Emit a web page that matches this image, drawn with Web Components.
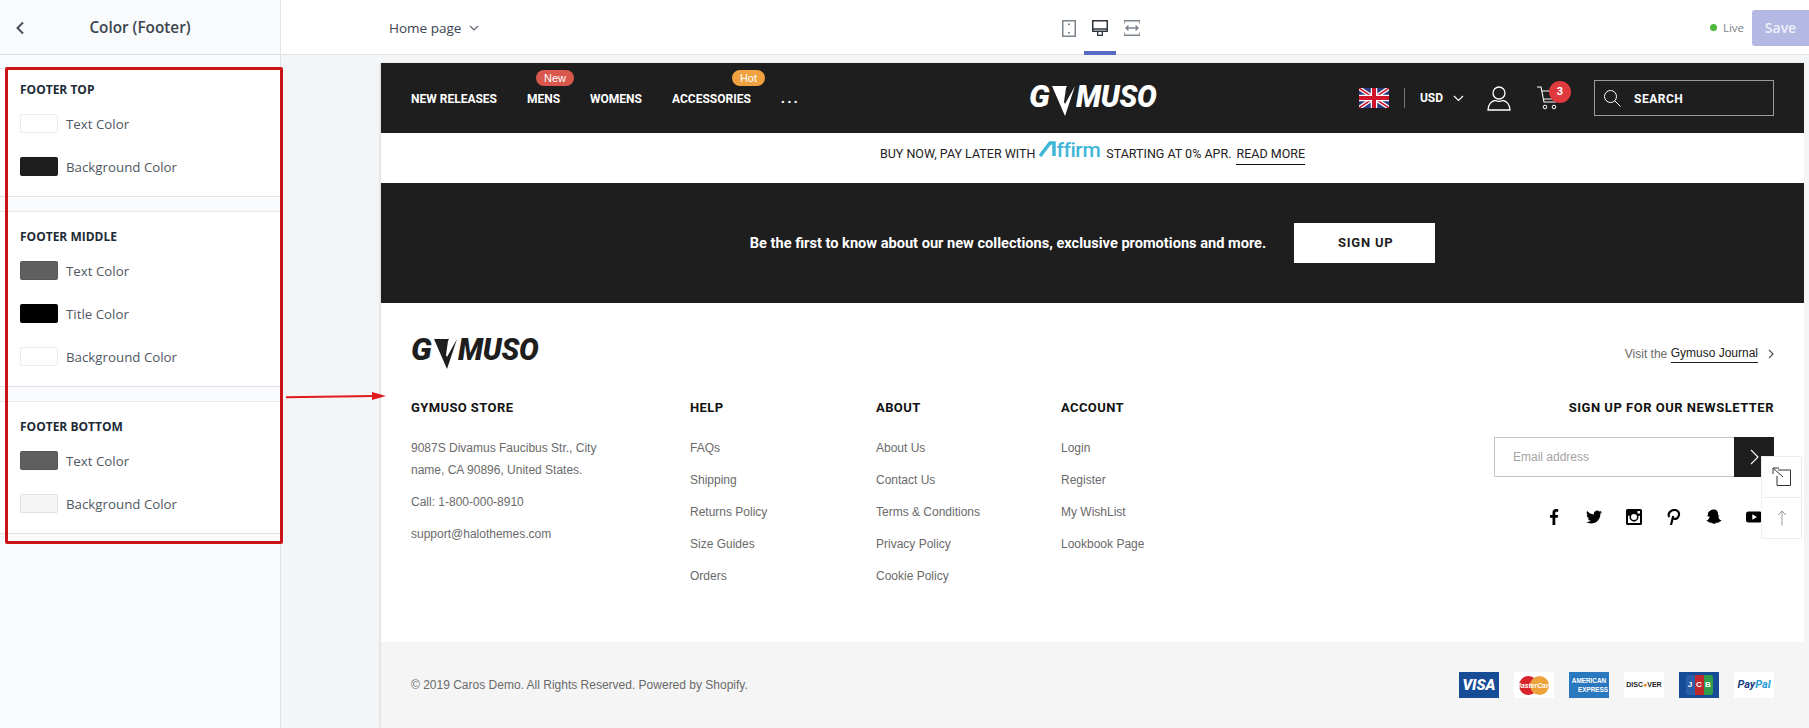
<!DOCTYPE html>
<html lang="en">
<head>
<meta charset="utf-8">
<title>Color (Footer)</title>
<style>
  html, body { margin: 0; height: 100%; overflow: hidden; }
  body { font-family: "Open Sans", "Liberation Sans", sans-serif; }
</style>
</head>
<body>
<editor-app></editor-app>

<script>
const DISPLAY = "Roboto, sans-serif";
const ARIAL = "'Liberation Sans', Arial, sans-serif";

class ColorRow extends HTMLElement {
  connectedCallback() {
    const color = this.getAttribute("color") || "#fff";
    const label = this.getAttribute("label") || "";
    this.attachShadow({ mode: "open" }).innerHTML = `
      <style>
        :host { display: flex; align-items: center; height: 19px; gap: 8px; margin-top: 24px; }
        .swatch { width: 38px; height: 19px; box-sizing: border-box; border-radius: 2px; background: ${color}; border: 1px solid rgba(0,0,0,.08); }
        span { font-size: 13.3px; color: #4f5863; }
      </style>
      <div class="swatch"></div><span>${label}</span>`;
  }
}
customElements.define("color-row", ColorRow);

class ColorSection extends HTMLElement {
  connectedCallback() {
    this.attachShadow({ mode: "open" }).innerHTML = `
      <style>
        :host { display: block; background: #fff; border-top: 1px solid #e6e8eb; border-bottom: 1px solid #dfe3e8; padding: 0 20px 20px; }
        h3 { margin: 0; font-size: 12px; line-height: 18px; font-weight: 700; color: #212b36; padding-top: var(--title-top, 16px); }
        ::slotted(color-row:first-of-type) { margin-top: 15px; }
      </style>
      <h3>${this.getAttribute("title")}</h3>
      <slot></slot>`;
  }
}
customElements.define("color-section", ColorSection);

class ThemeSidebar extends HTMLElement {
  constructor() {
    super();
    this.attachShadow({ mode: "open" }).innerHTML = `
      <style>
        :host { display: block; width: 281px; box-sizing: border-box; background: #f9fafb; border-right: 1px solid #e1e3e6; position: relative; }
        header { height: 55px; box-sizing: border-box; border-bottom: 1px solid #dfe3e8; position: relative; display: flex; align-items: center; justify-content: center; padding-bottom: 1px; }
        header svg { position: absolute; left: 15px; top: 21px; }
        h2 { margin: 0; font-size: 15.3px; font-weight: 600; color: #3b444f; }
        .sections { display: flex; flex-direction: column; gap: 14px; padding-top: 13px; }
        color-section:first-child { --title-top: 12px; }
        .red { position: absolute; left: 5px; top: 67px; width: 278px; height: 477px; box-sizing: border-box; border: 3px solid #cc1417; border-radius: 2px; pointer-events: none; }
      </style>
      <header>
        <svg width="10" height="14" viewBox="0 0 10 14"><path d="M8 1.5 2.5 7 8 12.5" fill="none" stroke="#454f5b" stroke-width="2"/></svg>
        <h2>Color (Footer)</h2>
      </header>
      <div class="sections">
        <color-section title="FOOTER TOP">
          <color-row color="#ffffff" label="Text Color"></color-row>
          <color-row color="#1e1e1e" label="Background Color"></color-row>
        </color-section>
        <color-section title="FOOTER MIDDLE">
          <color-row color="#5f5f5f" label="Text Color"></color-row>
          <color-row color="#000000" label="Title Color"></color-row>
          <color-row color="#ffffff" label="Background Color"></color-row>
        </color-section>
        <color-section title="FOOTER BOTTOM">
          <color-row color="#5f5f5f" label="Text Color"></color-row>
          <color-row color="#f5f5f5" label="Background Color"></color-row>
        </color-section>
      </div>
      <div class="red"></div>`;
  }
}
customElements.define("theme-sidebar", ThemeSidebar);

class TopBar extends HTMLElement {
  constructor() {
    super();
    this.attachShadow({ mode: "open" }).innerHTML = `
      <style>
        :host { display: grid; grid-template-columns: 772px auto 1fr; align-items: center; height: 55px; box-sizing: border-box; background: #fff; border-bottom: 1px solid #dfe3e8; }
        .page { display: flex; align-items: center; gap: 8px; padding-left: 108px; font-size: 13.5px; color: #3b444f; }
        .devices { display: flex; height: 55px; align-self: start; }
        .device { width: 31px; display: flex; align-items: center; justify-content: center; box-sizing: border-box; padding-top: 1px; }
        .device.on { width: 32px; border-bottom: 4px solid #5c6ac4; padding-top: 5px; }
        .right { display: flex; align-items: center; justify-content: flex-end; height: 54px; }
        .dot { width: 7px; height: 7px; border-radius: 50%; background: #50b83c; margin-right: 6px; }
        .live { font-size: 11.5px; color: #7a828b; margin-right: 8px; }
        .save { width: 57px; height: 36px; display: flex; align-items: center; justify-content: center; background: #b3b9e2; border-radius: 3px 0 0 3px; color: #eef0fa; font-size: 14px; font-weight: 600; }
      </style>
      <div class="page">Home page
        <svg width="10" height="6" viewBox="0 0 10 6"><path d="M1 1l4 4 4-4" fill="none" stroke="#5f6872" stroke-width="1.2"/></svg>
      </div>
      <div class="devices">
        <div class="device"><svg width="14" height="17" viewBox="0 0 14 17"><rect x=".75" y=".75" width="12.5" height="15.5" fill="none" stroke="#7b838c" stroke-width="1.5"/><rect x="6" y="3.5" width="2" height="1.5" fill="#7b838c"/><rect x="6" y="12" width="2" height="1.5" fill="#7b838c"/></svg></div>
        <div class="device on"><svg width="16" height="16" viewBox="0 0 16 16"><rect x=".75" y=".75" width="14.5" height="10.5" fill="none" stroke="#2c343d" stroke-width="1.5"/><path d="M1 9h14" stroke="#2c343d" stroke-width="1.5"/><path d="M5 15.3h6M5.7 11v4M10.3 11v4" stroke="#2c343d" stroke-width="1.3" fill="none"/></svg></div>
        <div class="device"><svg width="16" height="16" viewBox="0 0 16 16"><path d="M0 .8h16M0 15.2h16M0 .8v3M16 .8v3M0 15.2v-3M16 15.2v-3" fill="none" stroke="#7b838c" stroke-width="1.4"/><path d="M1.5 8h13M4.5 5.5 2 8l2.5 2.5M11.5 5.5 14 8l-2.5 2.5" fill="none" stroke="#7b838c" stroke-width="1.3"/></svg></div>
      </div>
      <div class="right"><div class="dot"></div><div class="live">Live</div><div class="save">Save</div></div>`;
  }
}
customElements.define("top-bar", TopBar);

class BrandLogo extends HTMLElement {
  connectedCallback() {
    const color = this.getAttribute("color") || "#fff";
    this.attachShadow({ mode: "open" }).innerHTML = `
      <style>
        :host { display: inline-flex; align-items: flex-start; height: 31px; color: ${color}; font-family: Roboto, sans-serif; font-weight: 900; font-style: italic; font-size: 32px; line-height: 23px; }
        span { display: inline-block; transform-origin: 0 0; }
        .g { width: 23px; transform: scaleX(.98); }
        .m { width: 80px; transform: scaleX(.92); letter-spacing: -.3px; }
        svg { margin-right: 1px; }
      </style>
      <span class="g">G</span>
      <svg width="23" height="31" viewBox="0 0 23 31"><path d="M0 1h15l-1 2-2 14 1 2 10-18-10 30z" fill="${color}"/></svg>
      <span class="m">MUSO</span>`;
  }
}
customElements.define("brand-logo", BrandLogo);

class StoreHeader extends HTMLElement {
  constructor() {
    super();
    this.attachShadow({ mode: "open" }).innerHTML = `
      <style>
        :host { display: grid; grid-template-columns: 1fr auto 1fr; align-items: center; height: 70px; padding: 0 30px; background: #1e1e1e; color: #fff; font-family: ${DISPLAY}; font-weight: 700; font-size: 12px; }
        nav { display: flex; gap: 30px; align-items: center; margin-top: 1px; }
        .item { position: relative; white-space: nowrap; }
        .badge { position: absolute; top: -22px; height: 16px; line-height: 16px; border-radius: 8px; font: 400 11px/16px ${ARIAL}; text-align: center; color: #fff; }
        .new { left: 9px; width: 38px; background: #d9574c; }
        .hot { left: 60px; width: 33px; background: #efa23f; }
        brand-logo { margin-top: 5px; }
        .tools { display: flex; align-items: center; justify-content: flex-end; }
        .div { width: 1px; height: 20px; background: #777; margin: 0 15px; }
        .usd { margin-right: 10px; }
        .cart { position: relative; margin: 0 35px 0 26px; height: 24px; }
        .count { position: absolute; left: 12px; top: -5px; width: 22px; height: 22px; border-radius: 50%; background: #e03a3e; font: 700 11px/22px ${DISPLAY}; text-align: center; }
        .search { width: 180px; height: 36px; box-sizing: border-box; border: 1px solid #9a9a9a; display: flex; align-items: center; gap: 13px; padding-left: 8px; letter-spacing: .5px; }
        .search span { margin-top: 1px; }
      </style>
      <nav>
        <div class="item">NEW RELEASES</div>
        <div class="item">MENS<span class="badge new">New</span></div>
        <div class="item">WOMENS</div>
        <div class="item">ACCESSORIES<span class="badge hot">Hot</span></div>
        <div class="item" style="letter-spacing:2px;font-size:15px;margin-top:-1px">...</div>
      </nav>
      <brand-logo color="#fff"></brand-logo>
      <div class="tools">
        <svg width="30" height="20" viewBox="0 0 60 40"><rect width="60" height="40" fill="#2a3a80"/><path d="M0 0l60 40M60 0 0 40" stroke="#fff" stroke-width="8"/><path d="M0 0l60 40M60 0 0 40" stroke="#cf142b" stroke-width="3"/><path d="M30 0v40M0 20h60" stroke="#fff" stroke-width="13"/><path d="M30 0v40M0 20h60" stroke="#cf142b" stroke-width="8"/></svg>
        <div class="div"></div>
        <div class="usd">USD</div>
        <svg width="11" height="7" viewBox="0 0 11 7"><path d="M1 1l4.5 4.500L10 1" fill="none" stroke="#fff" stroke-width="1.2"/></svg>
        <svg style="margin-left:23px" width="24" height="25" viewBox="0 0 24 25"><circle cx="12" cy="7" r="6" fill="none" stroke="#fff" stroke-width="1.3"/><path d="M1 24c0-6 4-9 7-9.500 2.500 1 5.500 1 8 0 3 .5 7 3.500 7 9.500z" fill="none" stroke="#fff" stroke-width="1.3"/></svg>
        <div class="cart">
          <svg width="22" height="24" viewBox="0 0 22 24"><path d="M0 1h4l3 15h12M5 5h16l-2 8H7" fill="none" stroke="#fff" stroke-width="1.1"/><circle cx="8" cy="21" r="1.800" fill="none" stroke="#fff"/><circle cx="17" cy="21" r="1.800" fill="none" stroke="#fff"/></svg>
          <span class="count">3</span>
        </div>
        <div class="search">
          <svg width="18" height="18" viewBox="0 0 18 18"><circle cx="7.500" cy="7.500" r="6" fill="none" stroke="#fff" stroke-width="1"/><path d="M11.800 11.800 17.500 17.500" stroke="#fff" stroke-width="1"/></svg>
          <span>SEARCH</span>
        </div>
      </div>`;
  }
}
customElements.define("store-header", StoreHeader);

class PromoBar extends HTMLElement {
  constructor() {
    super();
    this.attachShadow({ mode: "open" }).innerHTML = `
      <style>
        :host { display: flex; align-items: center; justify-content: center; gap: 4px; height: 50px; background: #fff; color: #222; font-family: ${DISPLAY}; font-size: 12.5px; padding-bottom: 10px; box-sizing: border-box; }
        .affirm { display: inline-flex; align-items: baseline; color: #3fb6d8; font: 500 21px/20px Roboto, sans-serif; letter-spacing: -.4px; margin: -7px 2px 0 0; }
        a { color: inherit; padding-bottom: 3px; border-bottom: 1px solid #111; margin-left: 1px; margin-top: 4px; }
      </style>
      <span>BUY NOW, PAY LATER WITH</span>
      <span class="affirm"><svg width="17" height="16" viewBox="0 0 17 16"><path d="M1 15 11 2h4v13" fill="none" stroke="#3fb6d8" stroke-width="3.500"/></svg>ffirm</span>
      <span>STARTING AT 0% APR.</span>
      <a>READ MORE</a>`;
  }
}
customElements.define("promo-bar", PromoBar);

class SignupBand extends HTMLElement {
  constructor() {
    super();
    this.attachShadow({ mode: "open" }).innerHTML = `
      <style>
        :host { display: flex; align-items: center; justify-content: center; gap: 28px; height: 120px; background: #1e1e1e; color: #fff; font-family: ${DISPLAY}; font-weight: 700; font-size: 14.6px; }
        button { all: unset; width: 141px; height: 40px; background: #fff; color: #1e1e1e; text-align: center; line-height: 40px; font-size: 13px; letter-spacing: .8px; padding-left: 2px; box-sizing: border-box; }
      </style>
      <span>Be the first to know about our new collections, exclusive promotions and more.</span>
      <button>SIGN UP</button>`;
  }
}
customElements.define("signup-band", SignupBand);

class FooterCol extends HTMLElement {
  connectedCallback() {
    this.attachShadow({ mode: "open" }).innerHTML = `
      <style>
        :host { display: block; }
        h4 { margin: 0 0 14px; font: 700 13px/20px ${DISPLAY}; letter-spacing: .4px; color: #111; }
        ::slotted(div) { font: 12px/32px ${ARIAL}; color: #6a6a6a; }
      </style>
      <h4>${this.getAttribute("title")}</h4>
      <slot></slot>`;
  }
}
customElements.define("footer-col", FooterCol);

class NewsletterBox extends HTMLElement {
  constructor() {
    super();
    this.attachShadow({ mode: "open" }).innerHTML = `
      <style>
        :host { display: flex; flex-direction: column; align-items: flex-end; }
        h4 { margin: 0 0 19px; font: 700 13px/20px ${DISPLAY}; letter-spacing: .5px; color: #111; }
        .form { display: flex; width: 280px; height: 40px; }
        .input { flex: 1; box-sizing: border-box; border: 1px solid #c4c4c4; border-right: 0; padding-left: 18px; font: 12px/38px ${ARIAL}; color: #a4a4a4; }
        .go { width: 40px; background: #1e1e1e; display: flex; align-items: center; justify-content: center; }
        .social { display: flex; gap: 24px; margin-top: 32px; padding-right: 12px; }
        .social svg { display: block; }
      </style>
      <h4>SIGN UP FOR OUR NEWSLETTER</h4>
      <div class="form">
        <div class="input">Email address</div>
        <div class="go"><svg width="9" height="16" viewBox="0 0 9 16"><path d="M1 1l7 7-7 7" fill="none" stroke="#fff" stroke-width="1.100"/></svg></div>
      </div>
      <div class="social">
        <svg width="16" height="16" viewBox="0 0 16 16"><path d="M9.300 16V8.800h2.400l.4-2.800H9.300V4.200c0-.8.200-1.400 1.400-1.400h1.500V.2C11.900.100 11.100 0 10.100 0 8 0 6.500 1.300 6.500 3.700V6H4v2.800h2.500V16z"/></svg>
        <svg width="16" height="16" viewBox="0 0 24 24"><path d="M23.950 4.570a10 10 0 0 1-2.820.77 4.960 4.960 0 0 0 2.160-2.720c-.95.55-2 .96-3.130 1.190a4.920 4.920 0 0 0-8.380 4.480C7.690 8.100 4.070 6.130 1.640 3.160a4.820 4.820 0 0 0-.66 2.470c0 1.700.87 3.210 2.190 4.100a4.900 4.900 0 0 1-2.230-.61v.06a4.920 4.920 0 0 0 3.950 4.830 5 5 0 0 1-2.210.08 4.940 4.940 0 0 0 4.600 3.420A9.870 9.870 0 0 1 0 19.540a14 14 0 0 0 7.560 2.210c9.050 0 14-7.500 14-13.980 0-.21 0-.42-.02-.63a9.940 9.940 0 0 0 2.460-2.550z"/></svg>
        <svg width="16" height="16" viewBox="0 0 16 16"><path fill-rule="evenodd" d="M1.500 0h13A1.500 1.500 0 0 1 16 1.500v13a1.500 1.500 0 0 1-1.500 1.500h-13A1.500 1.500 0 0 1 0 14.500v-13A1.500 1.500 0 0 1 1.500 0zM11.500 2v2.500H14V2zM2 6.800V14h12V6.800h-1.700a4.500 4.500 0 1 1-8.600 0zM8 5a3 3 0 1 0 0 6 3 3 0 0 0 0-6z"/></svg>
        <svg width="16" height="16" viewBox="0 0 16 16"><path d="M5 16l2.200-9M3.200 8C1.600 4.800 4 1 8.300 1c3.700 0 5.200 2.600 4.600 5.300-.6 2.800-3.600 4.500-5.600 3" fill="none" stroke="#000" stroke-width="2.200"/></svg>
        <svg width="16" height="16" viewBox="0 0 16 16"><path d="M8 .5c2.700 0 4 2 4 4.200v1.600l1.400.2-1.100 1.400c.4 1.500 1.700 3 3.200 3.500-.3.700-1.300 1-2 1.100l-.4 1c-1.500-.2-2.800.2-4 1.100-.6.300-1.600.3-2.200 0-1.200-.9-2.500-1.300-4-1.100l-.4-1c-.7-.1-1.700-.4-2-1.100 1.500-.5 2.800-2 3.200-3.500L.6 6.500 2 6.300V4.700C2 2.500 5.300.5 8 .5z"/></svg>
        <svg width="16" height="16" viewBox="0 0 16 16"><path fill-rule="evenodd" d="M2.500 2.500h11A2.500 2.500 0 0 1 16 5v6a2.500 2.500 0 0 1-2.500 2.500h-11A2.500 2.500 0 0 1 0 11V5a2.500 2.500 0 0 1 2.500-2.500zM6.300 5.300v5.400L11 8z"/></svg>
      </div>`;
  }
}
customElements.define("newsletter-box", NewsletterBox);

class FooterMiddle extends HTMLElement {
  constructor() {
    super();
    this.attachShadow({ mode: "open" }).innerHTML = `
      <style>
        :host { display: block; height: 339px; box-sizing: border-box; padding: 35px 30px 0; background: #fff; }
        .top { display: flex; justify-content: space-between; align-items: flex-start; height: 60px; }
        .visit { font: 12px/16px ${ARIAL}; color: #6a6a6a; display: flex; align-items: center; margin-top: 7px; white-space: pre; }
        .visit a { color: #222; border-bottom: 1px solid #222; padding-bottom: 1px; margin-right: 10px; }
        .cols { display: grid; grid-template-columns: 279px 186px 185px 1fr 280px; }
      </style>
      <div class="top">
        <brand-logo color="#1e1e1e"></brand-logo>
        <div class="visit">Visit the <a>Gymuso Journal</a><svg width="6" height="10" viewBox="0 0 6 10"><path d="M1 .8 5 5 1 9.200" fill="none" stroke="#444" stroke-width="1.100"/></svg></div>
      </div>
      <div class="cols">
        <footer-col title="GYMUSO STORE">
          <div style="line-height:22px;margin-top:19px">9087S Divamus Faucibus Str., City<br>name, CA 90896, United States.</div>
          <div style="line-height:22px;margin-top:10px">Call: 1-800-000-8910</div>
          <div style="line-height:22px;margin-top:10px">support@halothemes.com</div>
        </footer-col>
        <footer-col title="HELP">
          <div>FAQs</div><div>Shipping</div><div>Returns Policy</div><div>Size Guides</div><div>Orders</div>
        </footer-col>
        <footer-col title="ABOUT">
          <div>About Us</div><div>Contact Us</div><div>Terms &amp; Conditions</div><div>Privacy Policy</div><div>Cookie Policy</div>
        </footer-col>
        <footer-col title="ACCOUNT">
          <div>Login</div><div>Register</div><div>My WishList</div><div>Lookbook Page</div>
        </footer-col>
        <newsletter-box></newsletter-box>
      </div>`;
  }
}
customElements.define("footer-middle", FooterMiddle);

class PayCard extends HTMLElement {
  connectedCallback() {
    const type = this.getAttribute("type");
    const cards = {
      visa: `<div style="background:#164b96;color:#fff;font:italic 900 15px/26px Roboto,sans-serif">VISA</div>`,
      master: `<div style="background:#fff;position:relative"><i style="position:absolute;left:5px;top:4px;width:19px;height:19px;border-radius:50%;background:#d8232a"></i><i style="position:absolute;left:16px;top:4px;width:19px;height:19px;border-radius:50%;background:#eea23a"></i><b style="position:relative;color:#fff;font:italic 700 6.800px/27px ${ARIAL}">MasterCard</b></div>`,
      amex: `<div style="background:#2a78bd;color:#fff;font:700 6.400px/9px ${ARIAL};padding-top:4px;height:22px">AMERICAN<br><span style="padding-left:8px">EXPRESS</span></div>`,
      discover: `<div style="background:#fff;color:#222;font:700 7px/26px ${ARIAL}">DISC<span style="color:#e8862b">●</span>VER</div>`,
      jcb: `<div style="background:#164b96;display:flex;justify-content:center;align-items:center;color:#fff;font:700 8px/19px ${ARIAL}"><span style="background:#2b5ea8;width:9px;height:20px;border-radius:3px 0 0 3px">J</span><span style="background:#c0272d;width:9px;height:20px">C</span><span style="background:#2f9e4c;width:9px;height:20px;border-radius:0 3px 3px 0">B</span></div>`,
      paypal: `<div style="background:#fff;color:#1b3f84;font:italic 700 11px/26px Roboto,sans-serif">Pay<span style="color:#2a9bd6">Pal</span></div>`,
    };
    this.attachShadow({ mode: "open" }).innerHTML = `
      <style>
        :host { display: block; width: 40px; height: 26px; overflow: hidden; }
        div { height: 26px; text-align: center; white-space: nowrap; overflow: hidden; }
      </style>${cards[type]}`;
  }
}
customElements.define("pay-card", PayCard);

class FooterBottom extends HTMLElement {
  constructor() {
    super();
    this.attachShadow({ mode: "open" }).innerHTML = `
      <style>
        :host { display: flex; justify-content: space-between; align-items: center; height: 86px; padding: 0 30px; background: #f5f5f5; font: 12px ${ARIAL}; color: #6a6a6a; }
        .cards { display: flex; gap: 15px; }
      </style>
      <span>© 2019 Caros Demo. All Rights Reserved. Powered by Shopify.</span>
      <div class="cards">
        <pay-card type="visa"></pay-card><pay-card type="master"></pay-card><pay-card type="amex"></pay-card>
        <pay-card type="discover"></pay-card><pay-card type="jcb"></pay-card><pay-card type="paypal"></pay-card>
      </div>`;
  }
}
customElements.define("footer-bottom", FooterBottom);

class FloatTools extends HTMLElement {
  constructor() {
    super();
    this.attachShadow({ mode: "open" }).innerHTML = `
      <style>
        :host { position: absolute; right: 2px; top: 393px; width: 41px; background: #fff; border: 1px solid #eee; box-sizing: border-box; display: block; }
        div { height: 40px; display: flex; align-items: center; justify-content: center; }
        div + div { border-top: 1px solid #eee; }
      </style>
      <div><svg width="20" height="20" viewBox="0 0 20 20"><path d="M6 3h12.500v15.500H5V9" fill="none" stroke="#333" stroke-width="1"/><path d="M11 10 1.500 1.500M1 7V1h6" fill="none" stroke="#333" stroke-width="1"/></svg></div>
      <div><svg width="10" height="16" viewBox="0 0 10 16"><path d="M5 15.500V1M1 5l4-4 4 4" fill="none" stroke="#999" stroke-width="1"/></svg></div>`;
  }
}
customElements.define("float-tools", FloatTools);

class StorePreview extends HTMLElement {
  constructor() {
    super();
    this.attachShadow({ mode: "open" }).innerHTML = `
      <style>
        :host { display: block; flex: 1; position: relative; margin: 8px 5px 0 100px; box-shadow: -1px 0 2px rgba(0,0,0,.12); background: #fff; height: 665px; overflow: hidden; }
      </style>
      <store-header></store-header>
      <promo-bar></promo-bar>
      <signup-band></signup-band>
      <footer-middle></footer-middle>
      <footer-bottom></footer-bottom>
      <float-tools></float-tools>`;
  }
}
customElements.define("store-preview", StorePreview);

class EditorApp extends HTMLElement {
  constructor() {
    super();
    this.attachShadow({ mode: "open" }).innerHTML = `
      <style>
        :host { display: flex; width: 1809px; height: 728px; overflow: hidden; position: relative; background: #f4f5f7; }
        .main { flex: 1; display: flex; flex-direction: column; min-width: 0; }
        .stage { display: flex; flex: 1; min-height: 0; }
        .arrow { position: absolute; left: 286px; top: 388px; }
      </style>
      <theme-sidebar></theme-sidebar>
      <div class="main">
        <top-bar></top-bar>
        <div class="stage"><store-preview></store-preview></div>
      </div>
      <svg class="arrow" width="102" height="16" viewBox="0 0 102 16"><path d="M0 9.300 88 8" stroke="#e01b1f" stroke-width="2" fill="none"/><path d="M86 4 100 8 86 12z" fill="#e01b1f"/></svg>`;
  }
}
customElements.define("editor-app", EditorApp);
</script>
</body>
</html>
